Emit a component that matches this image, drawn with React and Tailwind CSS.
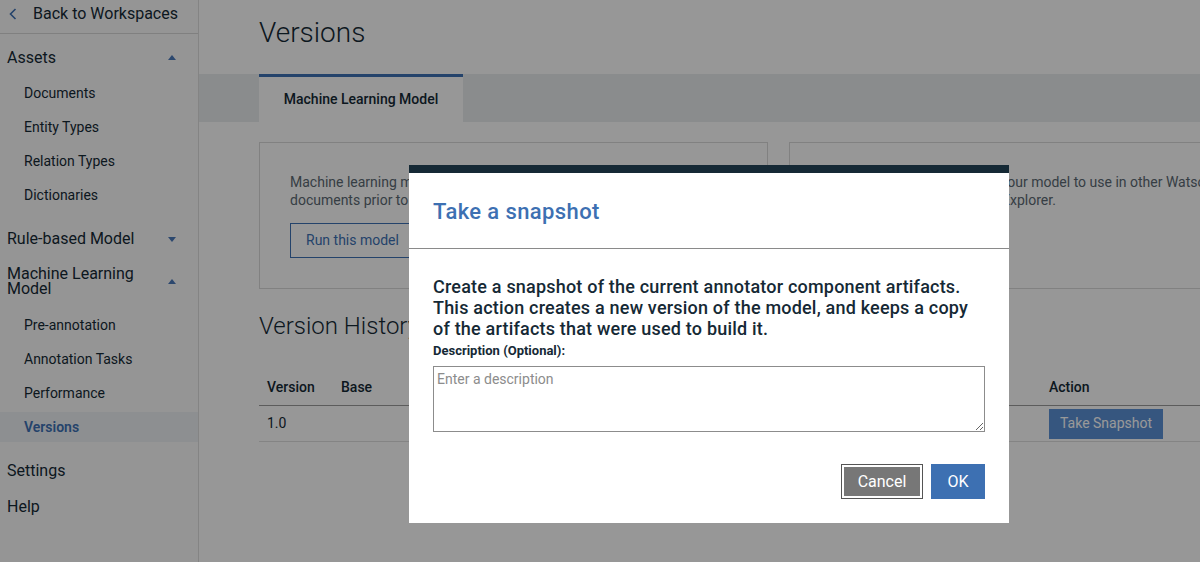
import React from 'react';

const font = { fontFamily: 'Roboto, "Liberation Sans", sans-serif' };

function Caret({ up }) {
  return (
    <svg width="8" height="5" viewBox="0 0 8 5" className="mr-[22px]">
      {up ? <polygon points="0,5 8,5 4,0" fill="#4a78b8" /> : <polygon points="0,0 8,0 4,5" fill="#4a78b8" />}
    </svg>
  );
}

function SubItem({ label, active }) {
  return (
    <div
      className={
        'h-[30px] mt-[4px] flex items-center pl-[24px] text-[14px] ' +
        (active ? 'bg-[#eceef2] text-[#3d70b2] font-semibold' : 'text-[#152935]')
      }
    >
      {label}
    </div>
  );
}

function Sidebar() {
  return (
    <div className="w-[199px] shrink-0 h-full bg-[#f9f9f9] border-r border-[#dcdcdc]">
      <div className="h-[34px] pb-[5px] flex items-center border-b border-[#d6d6d6] text-[16px] text-[#152935]">
        <svg width="8" height="12" viewBox="0 0 8 12" className="ml-[9px] mr-[16px]">
          <polyline points="6.5,1 1.5,6 6.5,11" fill="none" stroke="#3d70b2" strokeWidth="1.6" />
        </svg>
        Back to Workspaces
      </div>
      <div className="mt-[6px] h-[34px] pt-[1px] flex items-center justify-between pl-[7px] text-[16px] text-[#152935]">
        Assets
        <Caret up />
      </div>
      <SubItem label="Documents" />
      <SubItem label="Entity Types" />
      <SubItem label="Relation Types" />
      <SubItem label="Dictionaries" />
      <div className="mt-[12px] h-[34px] flex items-center justify-between pl-[7px] text-[16px] text-[#152935]">
        Rule-based Model
        <Caret />
      </div>
      <div className="pt-[10px] pb-[10px] flex items-center justify-between pl-[7px] text-[16px] leading-[15px] text-[#152935]">
        <span>
          Machine Learning
          <br />
          Model
        </span>
        <Caret up />
      </div>
      <SubItem label="Pre-annotation" />
      <SubItem label="Annotation Tasks" />
      <SubItem label="Performance" />
      <SubItem label="Versions" active />
      <div className="mt-[11px] h-[36px] flex items-center pl-[7px] text-[16px] text-[#152935]">Settings</div>
      <div className="h-[36px] flex items-center pl-[7px] text-[16px] text-[#152935]">Help</div>
    </div>
  );
}

function Main() {
  return (
    <div className="flex-1 h-full overflow-hidden bg-[#fcfcfc]">
      <div className="h-[74px] pl-[60px] pt-[15px] text-[28px] leading-[36px] font-light text-[#152935]">Versions</div>
      <div className="h-[48px] bg-[#e7e9ec] pl-[60px] flex">
        <div className="w-[204px] h-full border-t-[3px] border-[#3d70b2] bg-[#fcfcfc] flex items-center justify-center text-[14px] font-medium text-[#152935]">
          Machine Learning Model
        </div>
      </div>
      <div className="pl-[60px] w-[1099px]">
        <div className="mt-[20px] flex gap-[21px]">
          <div className="w-[509px] h-[147px] border border-[#d8d8d8] pl-[30px] pt-[30px]">
            <div className="text-[14px] leading-[18px] text-[#5a6872] whitespace-nowrap">
              Machine learning model can be used to pre-annotate
              <br />
              documents prior to human annotation.
            </div>
            <button className="mt-[14px] h-[35px] px-[15px] border border-[#3d70b2] text-[14px] text-[#3d70b2]">
              Run this model
            </button>
          </div>
          <div className="w-[509px] h-[147px] border border-[#d8d8d8] pl-[30px] pt-[30px]">
            <div className="text-[14px] leading-[18px] text-[#5a6872] whitespace-nowrap">
              Export or deploy a version of your model to use in other Watson
              <br />
              applications such as Watson Explorer.
            </div>
          </div>
        </div>
        <div className="mt-[22px] text-[24px] leading-[30px] font-light text-[#152935]">Version History</div>
        <div className="mt-[29px] text-[14px] text-[#152935]">
          <div className="grid grid-cols-[74px_150px_300px_258px_1fr] h-[36px] items-center border-b border-[#9a9a9a] font-medium">
            <div className="pl-[8px]">Version</div>
            <div className="pl-[8px]">Base</div>
            <div className="pl-[8px]">Created</div>
            <div className="pl-[8px]">Description</div>
            <div className="pl-[8px]">Action</div>
          </div>
          <div className="grid grid-cols-[74px_150px_300px_258px_1fr] h-[36px] items-center border-b border-[#dcdcdc]">
            <div className="pl-[8px]">1.0</div>
            <div className="pl-[8px]"></div>
            <div className="pl-[8px]">2018-03-12</div>
            <div className="pl-[8px]"></div>
            <div className="pl-[8px]">
              <button className="h-[30px] px-[11px] bg-[#5b8fd4] text-white text-[14px]">Take Snapshot</button>
            </div>
          </div>
        </div>
      </div>
    </div>
  );
}

function SnapshotModal() {
  return (
    <div className="absolute left-[409px] top-[165px] w-[600px] bg-white border-t-[8px] border-[#152935]">
      <div className="pl-[24px] pt-[25px] pb-[22px] border-b border-[#8a8a8a] text-[22px] leading-[28px] font-medium tracking-[0.4px] text-[#3d70b2]">
        Take a snapshot
      </div>
      <div className="px-[24px] pt-[27px] pb-[24px]">
        <div className="text-[18px] leading-[21px] font-medium tracking-[0.2px] text-[#152935] whitespace-nowrap">
          Create a snapshot of the current annotator component artifacts.
          <br />
          This action creates a new version of the model, and keeps a copy
          <br />
          of the artifacts that were used to build it.
        </div>
        <div className="mt-[4px] text-[13px] leading-[16px] font-bold text-[#152935]">Description (Optional):</div>
        <textarea
          className="mt-[7px] block w-full h-[66px] border border-[#8c8c8c] px-[3px] py-[2px] text-[14px] text-[#152935] placeholder:text-[#8c8c8c] outline-none"
          style={font}
          placeholder="Enter a description"
        />
        <div className="mt-[32px] flex justify-end gap-[8px]">
          <button className="w-[82px] h-[35px] bg-[#777777] border border-[#555555] shadow-[inset_0_0_0_2px_#ffffff] text-white text-[16px]">
            Cancel
          </button>
          <button className="w-[54px] h-[35px] bg-[#3d70b2] text-white text-[16px]">OK</button>
        </div>
      </div>
    </div>
  );
}

export default function App() {
  return (
    <div className="relative w-[1200px] h-[562px] overflow-hidden flex" style={font}>
      <Sidebar />
      <Main />
      <div className="absolute inset-0 bg-black/40"></div>
      <SnapshotModal />
    </div>
  );
}
